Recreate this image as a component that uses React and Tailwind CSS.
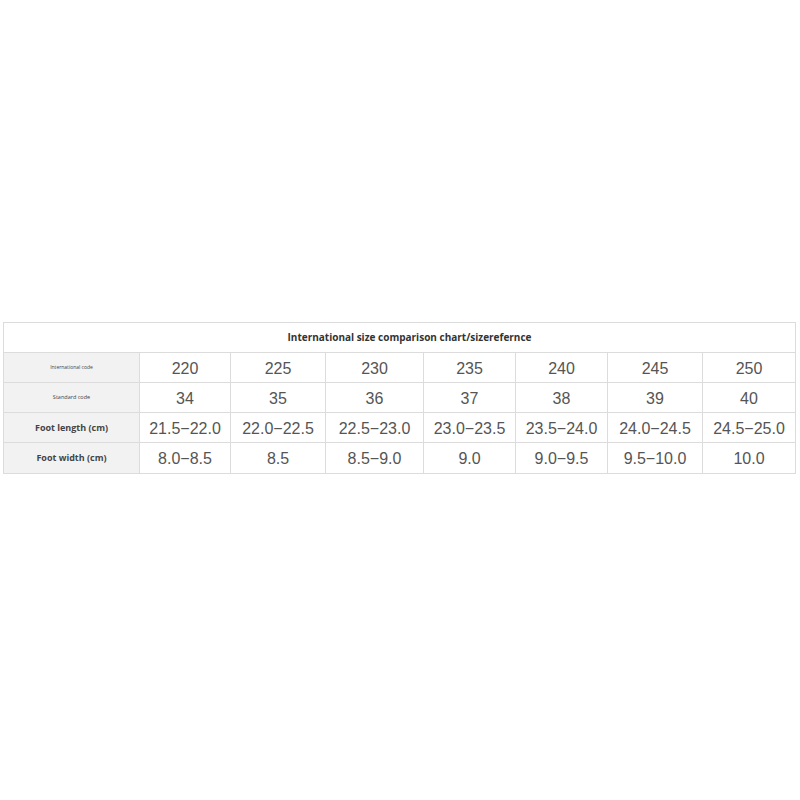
import React from "react";

const cols = [
  ["220", "34", "21.5−22.0", "8.0−8.5"],
  ["225", "35", "22.0−22.5", "8.5"],
  ["230", "36", "22.5−23.0", "8.5−9.0"],
  ["235", "37", "23.0−23.5", "9.0"],
  ["240", "38", "23.5−24.0", "9.0−9.5"],
  ["245", "39", "24.0−24.5", "9.5−10.0"],
  ["250", "40", "24.5−25.0", "10.0"],
];

const labels = [
  { t: "International code", cls: "text-[5px] font-normal" },
  { t: "Standard code", cls: "text-[5.5px] font-normal" },
  { t: "Foot length (cm)", cls: "text-[9px] font-bold" },
  { t: "Foot width (cm)", cls: "text-[9px] font-bold" },
];

export default function App() {
  return (
    <div className="w-[800px] h-[800px] bg-white flex flex-col">
      <div className="h-[322px]" />
      <div className="ml-[3px] w-[793px] border border-[#dcdcdc] flex flex-col">
        <div className="h-[30px] flex items-center justify-center pl-[20px] pb-[1px] border-b border-[#dcdcdc] text-[10px] font-bold text-[#333]" style={{ fontFamily: '"Open Sans", sans-serif' }}>
          International size comparison chart/sizerefernce
        </div>
        {labels.map((l, r) => (
          <div key={r} className={"grid grid-cols-[136px_91px_95px_98px_92px_92px_95px_1fr] h-[30px] " + (r < 3 ? "border-b border-[#dcdcdc]" : "")}>
            <div className={"bg-[#f2f2f2] flex items-center justify-center text-[#444] border-r border-[#dcdcdc] " + l.cls} style={{ fontFamily: '"Open Sans", sans-serif' }}>
              {l.t}
            </div>
            {cols.map((c, i) => (
              <div key={i} className={"flex items-center justify-center pt-[2px] text-[16px] text-[#555] " + (i < 6 ? "border-r border-[#dcdcdc]" : "")} style={{ fontFamily: '"Liberation Sans", Arial, sans-serif' }}>
                {c[r]}
              </div>
            ))}
          </div>
        ))}
      </div>
    </div>
  );
}
